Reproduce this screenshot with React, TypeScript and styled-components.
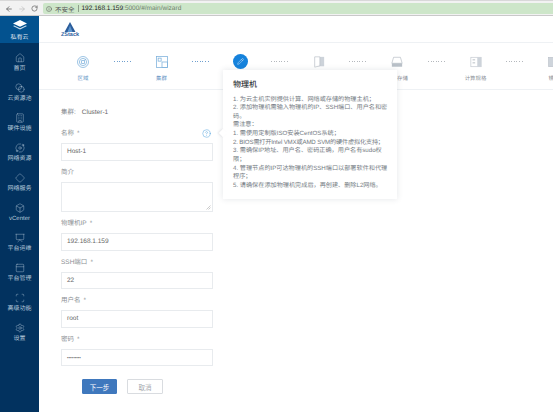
import React from "react";
import styled, { createGlobalStyle } from "styled-components";
import {
  ArrowLeft,
  ArrowRight,
  RotateCw,
  Info,
  House,
  Blend,
  Building,
  Orbit,
  Diamond,
  Box,
  Presentation,
  PanelTop,
  Scan,
  Settings,
  Pencil,
  HelpCircle,
} from "lucide-react";

const GlobalStyle = createGlobalStyle`
  html, body { margin: 0; padding: 0; background: #fff; }
  body {
    font-family: "Liberation Sans", "Noto Sans CJK SC", sans-serif;
    overflow: hidden;
    text-rendering: geometricPrecision;
  }
  * { box-sizing: border-box; }
`;

const Page = styled.div`
  width: 553px;
  height: 412px;
  display: flex;
  flex-direction: column;
  overflow: hidden;
  position: relative;
`;

const BrowserBar = styled.div`
  height: 16px;
  flex: none;
  display: flex;
  align-items: center;
  gap: 5px;
  padding: 1px 0 0 5px;
  background: #f2f2f2;
  border-top: 1px solid #d8d8d8;
  border-bottom: 1px solid #c9c9c9;
  color: #666;
`;

const NavIcons = styled.div`
  display: flex;
  gap: 5px;
  align-items: center;
`;

const AddressBar = styled.div`
  flex: 1;
  height: 11px;
  display: flex;
  align-items: center;
  padding-left: 3px;
  font-size: 6.5px;
  background: #cde6c9;
  border-radius: 2px 0 0 2px;
  color: #555;
`;

const SecureText = styled.span`
  margin-left: 3px;
`;

const Host = styled.span`
  color: #222;
`;

const Path = styled.span`
  color: #6d7f6c;
`;

const Sep = styled.span`
  width: 1px;
  height: 7px;
  margin: 0 3px;
  background: #8d9e8b;
`;

const Body = styled.div`
  flex: 1;
  display: flex;
  min-height: 0;
`;

const Sidebar = styled.nav`
  width: 39px;
  flex: none;
  background: #02325f;
  display: flex;
  flex-direction: column;
  color: #b9cbdc;
`;

const Brand = styled.div`
  height: 27px;
  background: #03528f;
  display: flex;
  flex-direction: column;
  align-items: center;
  justify-content: flex-end;
  padding-bottom: 1.5px;
  font-size: 6px;
  line-height: 8px;
  color: #e6eef5;
  gap: 3.5px;
`;

const NavList = styled.div`
  display: flex;
  flex-direction: column;
  padding-top: 9.5px;
`;

const NavItem = styled.div`
  height: 30px;
  display: flex;
  flex-direction: column;
  align-items: center;
  gap: 2.5px;
  font-size: 6px;
  line-height: 8px;
  white-space: nowrap;
`;

const Main = styled.main`
  flex: 1;
  min-width: 0;
  display: flex;
  flex-direction: column;
  position: relative;
`;

const Header = styled.header`
  height: 27px;
  flex: none;
  padding: 6px 0 0 22px;
  border-bottom: 1px solid #eef1f4;
  display: flex;
  flex-direction: column;
  align-items: flex-start;
`;

const LogoBlock = styled.div`
  display: flex;
  flex-direction: column;
  align-items: center;
  font-size: 5.5px;
  line-height: 6px;
  font-weight: 700;
  color: #2d5f9e;
`;

const Steps = styled.section`
  height: 47px;
  flex: none;
  display: flex;
  padding: 11.5px 0 0 20.5px;
  border-bottom: 1px solid #eef1f4;
  overflow: hidden;
`;

const Step = styled.div<{ $active?: boolean }>`
  width: 47px;
  flex: none;
  display: flex;
  flex-direction: column;
  align-items: center;
  gap: 6px;
  font-size: 5.4px;
  line-height: 8px;
  white-space: nowrap;
  color: ${(p) => (p.$active ? "#5f93c4" : "#8a8f96")};
`;

const StepIcon = styled.div`
  height: 14px;
  display: flex;
  align-items: center;
  justify-content: center;
`;

const ActiveDot = styled.div`
  width: 15px;
  height: 15px;
  flex: none;
  border-radius: 50%;
  background: #1582dc;
  color: #fff;
  display: flex;
  align-items: center;
  justify-content: center;
`;

const Connector = styled.div<{ $active?: boolean }>`
  width: 31.5px;
  flex: none;
  height: 1px;
  margin-top: 6.5px;
  padding: 0 7px;
  &::before {
    content: "";
    display: block;
    height: 1px;
    background: repeating-linear-gradient(
      90deg,
      ${(p) => (p.$active ? "#6f9fce" : "#b4b8bd")} 0 1px,
      transparent 1px 2.6px
    );
  }
`;

const Form = styled.form`
  width: 152px;
  margin: 19px 0 0 22px;
  display: flex;
  flex-direction: column;
  font-size: 6.5px;
  color: #8b8f94;
  position: relative;
`;

const ClusterRow = styled.div`
  display: flex;
  gap: 6px;
  line-height: 8px;
  margin-bottom: 13px;
  span:last-child {
    color: #666;
  }
`;

const Field = styled.div`
  display: flex;
  flex-direction: column;
  margin-bottom: 8px;
`;

const Label = styled.div`
  line-height: 8px;
  height: 8px;
  margin-bottom: 5px;
  display: flex;
  justify-content: space-between;
  white-space: nowrap;
`;

const Star = styled.span`
  margin-left: 3px;
`;

const Input = styled.div<{ $secret?: boolean }>`
  height: 17.5px;
  border: 1px solid #e8ebee;
  padding: 0 5px;
  display: flex;
  align-items: center;
  color: #666;
  font-size: ${(p) => (p.$secret ? "4.4px" : "6.5px")};
`;

const TextArea = styled.div`
  height: 30.5px;
  border: 1px solid #e8ebee;
  position: relative;
`;

const Grip = styled.svg`
  position: absolute;
  right: 1px;
  bottom: 1px;
`;

const Help = styled(HelpCircle)`
  margin: -1px 2px 0 0;
  color: #3f97d8;
`;

const Buttons = styled.div`
  display: flex;
  gap: 10px;
  margin: 5px 0 0 21px;
`;

const Button = styled.button<{ $primary?: boolean }>`
  height: 15px;
  width: ${(p) => (p.$primary ? "35px" : "36px")};
  padding: 0;
  font-size: 6.5px;
  font-family: inherit;
  border-radius: 1px;
  border: 1px solid ${(p) => (p.$primary ? "#3f78bd" : "#d9dce0")};
  background: ${(p) => (p.$primary ? "#3f78bd" : "#fff")};
  color: ${(p) => (p.$primary ? "#fff" : "#a5a9ae")};
`;

const Popover = styled.aside`
  position: absolute;
  left: 184px;
  top: 54px;
  width: 174px;
  height: 129px;
  padding: 8.5px 9px 0 10px;
  background: #fff;
  box-shadow: 0 0 6px rgba(60, 70, 90, 0.14);
  &::before {
    content: "";
    position: absolute;
    left: -3px;
    top: 60px;
    width: 6px;
    height: 6px;
    background: #fff;
    transform: rotate(45deg);
    box-shadow: -1px 1px 2px rgba(60, 70, 90, 0.1);
  }
`;

const PopTitle = styled.div`
  font-size: 8px;
  line-height: 11px;
  font-weight: 500;
  color: #33373c;
  margin-bottom: 6px;
`;

const PopText = styled.div`
  font-size: 6.15px;
  line-height: 8.65px;
  color: #737a82;
`;

const TightLine = styled.span`
  white-space: nowrap;
  letter-spacing: -0.16px;
`;

const PageIcon = styled.svg`
  display: block;
`;

const navItems = [
  { label: "首页", Icon: House },
  { label: "云资源池", Icon: Blend },
  { label: "硬件设施", Icon: Building },
  { label: "网络资源", Icon: Orbit },
  { label: "网络服务", Icon: Diamond },
  { label: "vCenter", Icon: Box },
  { label: "平台运维", Icon: Presentation },
  { label: "平台管理", Icon: PanelTop },
  { label: "高级功能", Icon: Scan },
  { label: "设置", Icon: Settings },
];

const ZoneIcon = () => (
  <PageIcon width="12" height="12" viewBox="0 0 14 14" fill="none" stroke="#7fb2dc" strokeWidth="0.9">
    <circle cx="7" cy="7" r="6.4" />
    <circle cx="7" cy="7" r="4.2" />
    <rect x="5.4" y="5.4" width="3.2" height="3.2" />
    <path d="M8.6 5.4 10.4 3.4" />
  </PageIcon>
);

const ClusterIcon = () => (
  <PageIcon width="12" height="12" viewBox="0 0 14 14" fill="none" stroke="#7fb2dc" strokeWidth="0.9">
    <rect x="0.5" y="0.5" width="13" height="13" />
    <rect x="2.5" y="2.5" width="3.5" height="3.5" />
    <rect x="7" y="7" width="6.5" height="6.5" />
  </PageIcon>
);

const DoorIcon = () => (
  <PageIcon width="12" height="12" viewBox="0 0 14 14">
    <rect x="2" y="1" width="11" height="11" fill="#cdd3da" />
    <path d="M2 1h6v10.5L2 13z" fill="#fff" stroke="#b5bcc4" strokeWidth="0.7" />
  </PageIcon>
);

const StorageIcon = () => (
  <PageIcon width="12" height="12" viewBox="0 0 14 14">
    <path d="M3 1.5h8l2 7H1z" fill="#fff" stroke="#b5bcc4" strokeWidth="0.8" />
    <rect x="1" y="8.5" width="12" height="4" fill="#b9c0c8" />
  </PageIcon>
);

const ComputeIcon = () => (
  <PageIcon width="12" height="12" viewBox="0 0 14 14">
    <rect x="1" y="1.5" width="12" height="11" fill="#fff" stroke="#c2c8cf" strokeWidth="0.8" />
    <rect x="8.5" y="1.5" width="4.5" height="11" fill="#cdd3da" />
    <path d="M3 4.5h3M3 8h3" stroke="#9aa2ab" strokeWidth="0.8" />
  </PageIcon>
);

const LastIcon = () => (
  <PageIcon width="12" height="12" viewBox="0 0 14 14">
    <rect x="0.5" y="1.5" width="13" height="11" fill="#ced4db" stroke="#b5bcc4" strokeWidth="0.6" />
  </PageIcon>
);

const CloudIcon = () => (
  <PageIcon width="14" height="10" viewBox="0 0 14 10">
    <path d="M7 0 14 3.4 7 6.8 0 3.4z" fill="#fff" />
    <path d="M1.2 5.4 7 8.2l5.8-2.8L14 6 7 9.6 0 6z" fill="#cfe0ee" />
  </PageIcon>
);

const LogoIcon = () => (
  <PageIcon width="12" height="10" viewBox="0 0 12 10">
    <path d="M6 0 11.5 10H8L6 6 4 10H.5z" fill="#2b5d9b" />
    <path d="M6 3.5 8.5 10h-5z" fill="#5f97cf" />
  </PageIcon>
);

export default function App() {
  return (
    <Page>
      <GlobalStyle />
      <BrowserBar>
        <NavIcons>
          <ArrowLeft size={8} strokeWidth={2.4} />
          <ArrowRight size={8} strokeWidth={2} color="#bbb" />
          <RotateCw size={7} strokeWidth={2.4} />
        </NavIcons>
        <AddressBar>
          <Info size={6} />
          <SecureText>不安全</SecureText>
          <Sep />
          <Host>192.168.1.159</Host>
          <Path>:5000/#/main/wizard</Path>
        </AddressBar>
      </BrowserBar>
      <Body>
        <Sidebar>
          <Brand>
            <CloudIcon />
            私有云
          </Brand>
          <NavList>
            {navItems.map(({ label, Icon }) => (
              <NavItem key={label}>
                <Icon size={10} strokeWidth={1} />
                {label}
              </NavItem>
            ))}
          </NavList>
        </Sidebar>
        <Main>
          <Header>
            <LogoBlock>
              <LogoIcon />
              ZStack
            </LogoBlock>
          </Header>
          <Steps>
            <Step $active>
              <StepIcon><ZoneIcon /></StepIcon>
              区域
            </Step>
            <Connector $active />
            <Step $active>
              <StepIcon><ClusterIcon /></StepIcon>
              集群
            </Step>
            <Connector $active />
            <Step>
              <StepIcon>
                <ActiveDot><Pencil size={7} strokeWidth={1.4} /></ActiveDot>
              </StepIcon>
            </Step>
            <Connector />
            <Step>
              <StepIcon><DoorIcon /></StepIcon>
            </Step>
            <Connector />
            <Step>
              <StepIcon><StorageIcon /></StepIcon>
              镜像存储
            </Step>
            <Connector />
            <Step>
              <StepIcon><ComputeIcon /></StepIcon>
              计算规格
            </Step>
            <Connector />
            <Step>
              <StepIcon><LastIcon /></StepIcon>
              镜像
            </Step>
          </Steps>
          <Form>
            <ClusterRow>
              <span>集群:</span>
              <span>Cluster-1</span>
            </ClusterRow>
            <Field>
              <Label>
                <span>名称<Star>*</Star></span>
                <Help size={9} strokeWidth={1.2} />
              </Label>
              <Input>Host-1</Input>
            </Field>
            <Field>
              <Label>简介</Label>
              <TextArea>
                <Grip width="5" height="5" viewBox="0 0 5 5" stroke="#999" strokeWidth="0.5">
                  <path d="M0.5 4.5 4.5 0.5M2.5 4.5 4.5 2.5" />
                </Grip>
              </TextArea>
            </Field>
            <Field>
              <Label><span>物理机IP<Star>*</Star></span></Label>
              <Input>192.168.1.159</Input>
            </Field>
            <Field>
              <Label><span>SSH端口<Star>*</Star></span></Label>
              <Input>22</Input>
            </Field>
            <Field>
              <Label><span>用户名<Star>*</Star></span></Label>
              <Input>root</Input>
            </Field>
            <Field>
              <Label><span>密码<Star>*</Star></span></Label>
              <Input $secret>•••••••••</Input>
            </Field>
            <Buttons>
              <Button type="button" $primary>下一步</Button>
              <Button type="button">取消</Button>
            </Buttons>
          </Form>
          <Popover>
            <PopTitle>物理机</PopTitle>
            <PopText>
              1. 为云主机实例提供计算、网络或存储的物理主机；
              <br />
              2. 添加物理机需输入物理机的IP、SSH端口、用户名和密码。
              <br />
              需注意：
              <br />
              1. 需使用定制版ISO安装CentOS系统；
              <br />
              <TightLine>2. BIOS需打开Intel VMX或AMD SVM的硬件虚拟化支持；</TightLine>
              <br />
              3. 需确保IP地址、用户名、密码正确，用户名有sudo权限；
              <br />
              4. 管理节点的IP可达物理机的SSH端口以部署软件和代理程序；
              <br />
              5. 请确保在添加物理机完成后，再创建、删除L2网络。
            </PopText>
          </Popover>
        </Main>
      </Body>
    </Page>
  );
}
